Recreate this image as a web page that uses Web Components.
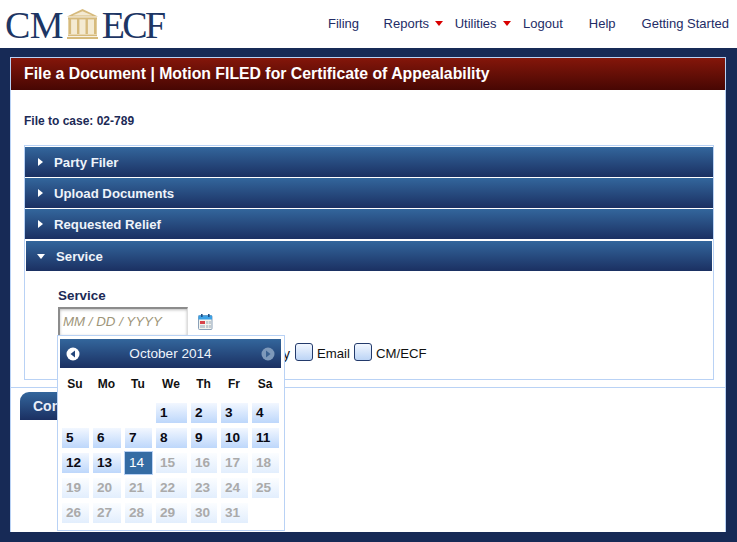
<!DOCTYPE html>
<html><head><meta charset="utf-8"><title>CM/ECF</title>
<style>
html,body{margin:0;padding:0;background:#172a56;font-family:"Liberation Sans",Arial,sans-serif;}
body{width:737px;height:542px;overflow:hidden;}
</style></head><body>
<cm-header></cm-header>
<cm-panel></cm-panel>
<script>
function def(name,css,html,setup){
  customElements.define(name,class extends HTMLElement{
    connectedCallback(){
      if(this.shadowRoot)return;
      const r=this.attachShadow({mode:'open'});
      r.innerHTML='<style>'+css+'</style>'+(typeof html==='function'?html(this):html);
      if(setup)setup(r,this);
    }
  });
}
def('cm-logo',`
:host{display:flex;align-items:flex-start;height:48px;color:#1d3664;font-family:"Liberation Serif",serif;font-size:38px;line-height:48px;margin-left:5px;}
span{display:block;margin-top:1px}
.a{letter-spacing:-.7px}.b{letter-spacing:-2.6px}
svg{display:block;margin:8px 3px 0 4px}
`,`<span class="a">CM</span>
<svg width="32" height="32" viewBox="0 0 32 32">
<rect x="1" y="11" width="29" height="16" fill="#f4ead2"/>
<path d="M15.5 1 L31 8.6 L0 8.6Z" fill="#d6ba7c"/><path d="M15.5 3.2 L25.5 7.6 L5.5 7.6Z" fill="#f4ead2"/>
<g fill="#d6ba7c"><rect x="1" y="9.4" width="29" height="2"/>
<rect x="1.5" y="11" width="2.6" height="15"/><rect x="10" y="11" width="2.4" height="15"/><rect x="18.5" y="11" width="2.4" height="15"/><rect x="27" y="11" width="2.6" height="15"/>
<rect x="1" y="26.6" width="29" height="1.6"/><rect x="0" y="29" width="31" height="2"/></g></svg>
<span class="b">ECF</span>`);
def('cm-nav-item',`
:host{display:flex;align-items:center;color:#232c66;font-size:13px;white-space:nowrap;line-height:48px;height:48px;}
i{display:block;width:0;height:0;border:4px solid transparent;border-top:5px solid #d80000;border-bottom:0;margin-left:6px;margin-top:-2px}
`,h=>`<slot></slot>${h.hasAttribute('menu')?'<i></i>':''}`);
def('cm-header',`
:host{display:flex;height:48px;background:#fff;justify-content:space-between;}
nav{display:flex;margin-right:8px}
`,`<cm-logo></cm-logo><nav>
<cm-nav-item style="margin-right:24.5px">Filing</cm-nav-item>
<cm-nav-item menu style="margin-right:11.5px">Reports</cm-nav-item>
<cm-nav-item menu style="margin-right:12.5px">Utilities</cm-nav-item>
<cm-nav-item style="margin-right:26px">Logout</cm-nav-item>
<cm-nav-item style="margin-right:26px">Help</cm-nav-item>
<cm-nav-item>Getting Started</cm-nav-item></nav>`);
def('cm-acc-row',`
:host{display:flex;align-items:center;height:30px;margin-bottom:1px;color:#eef3fa;font-weight:bold;font-size:13.2px;
 background:linear-gradient(#33669c,#1b3062);padding-left:13px;}
:host([open]){height:30px;margin:2px 1px 0 1px;padding-left:11px}
i{display:block;width:0;height:0;border:4px solid transparent;border-left:5px solid #fff;border-right:0;margin-right:11px}
:host([open]) i{border:4px solid transparent;border-top:5px solid #fff;border-bottom:0;margin-right:11px}
`,`<i></i><slot></slot>`);
def('cm-check',`
:host{display:inline-flex;align-items:center;font-size:13.2px;color:#111;}
b{display:block;width:16px;height:16px;border:1px solid #233a6b;border-radius:3px;background:linear-gradient(#f2f7ff,#bcd4f5);margin:0 4px 0 5px}
:host(:last-child) b{margin-left:4px}
span{display:block;padding-top:3px}
`,`<b></b><span><slot></slot></span>`);
def('cm-cal-icon',`
:host{display:block;width:15px;height:17px}svg{display:block}
`,`<svg width="15" height="17" viewBox="0 0 15 17"><rect x="0.5" y="2.5" width="13.5" height="14" rx="1" fill="#f3f3ee" stroke="#8aa0b8"/>
<rect x="0.5" y="2.5" width="13.5" height="4" fill="#3da2e6"/><rect x="3" y="1" width="1.6" height="3" fill="#1e4f86"/><rect x="10" y="1" width="1.6" height="3" fill="#1e4f86"/>
<rect x="2" y="8" width="5" height="3" fill="#d8434a"/><rect x="8" y="8" width="2.4" height="3" fill="#c4ccd2"/><rect x="11" y="8" width="2" height="3" fill="#c4ccd2"/>
<rect x="2" y="12" width="5" height="3" fill="#c4ccd2"/><rect x="8" y="12" width="2.4" height="3" fill="#c4ccd2"/><rect x="11" y="12" width="2" height="3" fill="#c4ccd2"/></svg>`);
def('cm-datepicker',`
:host{display:block;position:absolute;left:46px;top:277px;width:226px;height:194px;background:#fff;border:1px solid #b9d2f5;box-sizing:content-box;font-size:12px;font-weight:bold;}
.head{display:flex;align-items:center;justify-content:space-between;margin:3px 3px 0 2px;height:29px;padding:0 6px;background:linear-gradient(#33669c,#1b3062);color:#eef4fb;font-size:13.6px;font-weight:normal;}
.head svg{display:block}
.dow,.days{display:grid;grid-template-columns:27px 28px 27px 31px 26px 27px 27px;column-gap:4px;margin-left:4px;}
.dow{height:32px;align-items:center;color:#111;}
.dow div{text-align:center;padding-right:1px}
.days{row-gap:5.4px;margin-top:3px;grid-auto-rows:19.6px}
.d{background:linear-gradient(#f2f7ff,#bdd7fb);color:#0a0a14;font-size:13.6px;line-height:19px;padding-left:4px;}
.d.m{background:linear-gradient(#fbfdff,#e2eefd);color:#aaa;}
.d.t{background:#356ca4;color:#fff;box-shadow:0 0 0 1px #b9d2f5;font-weight:normal;margin:-1px 0;line-height:21px}
`,`<div class="head"><svg width="14" height="14" viewBox="0 0 14 14"><circle cx="7" cy="7" r="6.5" fill="#fff"/><path d="M9 3.5 L4.5 7 L9 10.5Z" fill="#23457a"/></svg><span>October 2014</span><svg width="14" height="14" viewBox="0 0 14 14"><circle cx="7" cy="7" r="6.5" fill="#7e99ba"/><path d="M5 3.5 L9.5 7 L5 10.5Z" fill="#3b6291"/></svg></div>
<div class="dow">${['Su','Mo','Tu','We','Th','Fr','Sa'].map(x=>`<div>${x}</div>`).join('')}</div>
<div class="days">${[0,0,0].map(()=>'<div></div>').join('')}${Array.from({length:31},(_,i)=>{const n=i+1;return `<div class="d${n==14?' t':n>14?' m':''}">${n}</div>`}).join('')}</div>`);
def('cm-panel',`
:host{display:block;position:relative;margin:9px 11px 10px 10px;height:475px;background:#fff;border:solid #b9d2f5;border-width:1px 1px 0 1px;box-sizing:border-box;}
.title{height:32px;background:linear-gradient(#84160a,#470703);color:#fff;font-weight:bold;font-size:15.8px;line-height:32px;padding-left:13px;}
.case{font-size:12px;font-weight:bold;color:#1c2a56;padding:24px 0 0 13px;height:31px;line-height:15px;}
.acc{margin:0 11px 0 13px;border:1px solid #b9d2f5;height:235px;box-sizing:border-box;padding-top:1px}
.body{padding:17px 0 0 33px;position:relative}
.lbl{font-weight:bold;color:#1c2a56;font-size:13.4px;line-height:16px}
.inrow{display:flex;align-items:center;margin-top:3px;gap:10px}
.in{width:130px;height:28px;box-sizing:border-box;border:2px solid #8c8c8c;border-right:1px solid #ddd;border-bottom:0;box-shadow:inset 0 1px 3px #bbb;font:italic 13.3px "Liberation Sans",sans-serif;color:#9e9579;line-height:26px;padding-left:3px;}
.checks{display:flex;margin:6px 0 0 225px;align-items:center;font-size:14px;color:#111;height:22px}
.checks>span{padding-top:3px}
.foot{margin-top:7px;border-top:1px solid #b9d2f5;padding:4px 0 0 9px}
.btn{width:100px;height:28px;box-sizing:border-box;border-radius:9px 0 0 0;background:linear-gradient(#33669c,#1b3062);color:#e8eef8;font-weight:bold;font-size:14px;line-height:28px;padding-left:13px;}
`,`<div class="title">File a Document | Motion FILED for Certificate of Appealability</div>
<div class="case">File to case: 02-789</div>
<div class="acc">
<cm-acc-row>Party Filer</cm-acc-row><cm-acc-row>Upload Documents</cm-acc-row><cm-acc-row>Requested Relief</cm-acc-row><cm-acc-row open>Service</cm-acc-row>
<div class="body"><div class="lbl">Service</div>
<div class="inrow"><div class="in">MM / DD / YYYY</div><cm-cal-icon></cm-cal-icon></div>
<div class="checks"><span>y</span><cm-check>Email</cm-check><cm-check>CM/ECF</cm-check></div></div>
</div>
<div class="foot"><div class="btn">Con</div></div>
<cm-datepicker></cm-datepicker>`);
</script></body></html>
